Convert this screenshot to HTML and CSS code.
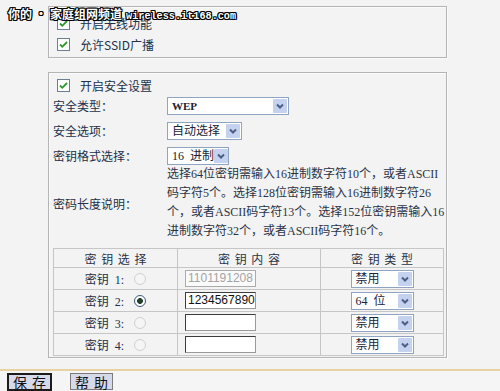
FILE: index.html
```html
<!DOCTYPE html>
<html lang="zh-CN">
<head>
<meta charset="utf-8">
<title>无线安全设置</title>
<link rel="stylesheet" href="styles.css">
</head>
<body>
<div class="watermark">你的<span class="dot">•</span>家庭组网频道<span class="url">wireless.it168.com</span></div>
<div class="page">
  <fieldset class="box box-top">
    <div class="check-row">
      <span class="cb"><svg viewBox="0 0 13 13" width="13" height="13"><rect x="0.5" y="0.5" width="12" height="12" fill="#fff" stroke="#6a7e9a"/><path d="M3 6.5 L5.3 8.8 L10 4" fill="none" stroke="#2a9a2a" stroke-width="1.8"/></svg></span>
      <span>开启无线功能</span>
    </div>
    <div class="check-row">
      <span class="cb"><svg viewBox="0 0 13 13" width="13" height="13"><rect x="0.5" y="0.5" width="12" height="12" fill="#fff" stroke="#6a7e9a"/><path d="M3 6.5 L5.3 8.8 L10 4" fill="none" stroke="#2a9a2a" stroke-width="1.8"/></svg></span>
      <span>允许SSID广播</span>
    </div>
  </fieldset>

  <fieldset class="box box-sec">
    <div class="check-row check-sec">
      <span class="cb"><svg viewBox="0 0 13 13" width="13" height="13"><rect x="0.5" y="0.5" width="12" height="12" fill="#fff" stroke="#6a7e9a"/><path d="M3 6.5 L5.3 8.8 L10 4" fill="none" stroke="#2a9a2a" stroke-width="1.8"/></svg></span>
      <span>开启安全设置</span>
    </div>

    <div class="form-row">
      <div class="lbl">安全类型：</div>
      <div class="sel sel-wep"><span class="sel-text wep">WEP</span><span class="sel-btn"><svg viewBox="0 0 14 14" width="14" height="14"><path d="M4 5.5 L7 8.5 L10 5.5" fill="none" stroke="#4a5f86" stroke-width="2"/></svg></span></div>
    </div>
    <div class="form-row">
      <div class="lbl">安全选项：</div>
      <div class="sel sel-opt"><span class="sel-text">自动选择</span><span class="sel-btn"><svg viewBox="0 0 14 14" width="14" height="14"><path d="M4 5.5 L7 8.5 L10 5.5" fill="none" stroke="#4a5f86" stroke-width="2"/></svg></span></div>
    </div>
    <div class="form-row">
      <div class="lbl">密钥格式选择：</div>
      <div class="sel sel-fmt"><span class="sel-text">16 进制</span><span class="sel-btn"><svg viewBox="0 0 14 14" width="14" height="14"><path d="M4 5.5 L7 8.5 L10 5.5" fill="none" stroke="#4a5f86" stroke-width="2"/></svg></span></div>
    </div>

    <div class="desc-row">
      <div class="lbl">密码长度说明：</div>
      <p class="desc">选择64位密钥需输入16进制数字符10个，或者ASCII<br>码字符5个。选择128位密钥需输入16进制数字符26<br>个，或者ASCII码字符13个。选择152位密钥需输入16<br>进制数字符32个，或者ASCII码字符16个。</p>
    </div>

    <table class="keys">
      <thead>
        <tr><th class="c1">密 钥 选 择</th><th class="c2">密 钥 内 容</th><th class="c3">密 钥 类 型</th></tr>
      </thead>
      <tbody>
        <tr>
          <td class="c1"><span class="key-lbl">密钥 1:</span><span class="radio"></span></td>
          <td class="c2"><div class="key-input disabled">1101191208</div></td>
          <td class="c3"><div class="sel sel-type"><span class="sel-text">禁用</span><span class="sel-btn"><svg viewBox="0 0 14 14" width="14" height="14"><path d="M4 5.5 L7 8.5 L10 5.5" fill="none" stroke="#4a5f86" stroke-width="2"/></svg></span></div></td>
        </tr>
        <tr>
          <td class="c1"><span class="key-lbl">密钥 2:</span><span class="radio on"></span></td>
          <td class="c2"><div class="key-input">1234567890</div></td>
          <td class="c3"><div class="sel sel-type"><span class="sel-text">64 位</span><span class="sel-btn"><svg viewBox="0 0 14 14" width="14" height="14"><path d="M4 5.5 L7 8.5 L10 5.5" fill="none" stroke="#4a5f86" stroke-width="2"/></svg></span></div></td>
        </tr>
        <tr>
          <td class="c1"><span class="key-lbl">密钥 3:</span><span class="radio"></span></td>
          <td class="c2"><div class="key-input"></div></td>
          <td class="c3"><div class="sel sel-type"><span class="sel-text">禁用</span><span class="sel-btn"><svg viewBox="0 0 14 14" width="14" height="14"><path d="M4 5.5 L7 8.5 L10 5.5" fill="none" stroke="#4a5f86" stroke-width="2"/></svg></span></div></td>
        </tr>
        <tr>
          <td class="c1"><span class="key-lbl">密钥 4:</span><span class="radio"></span></td>
          <td class="c2"><div class="key-input"></div></td>
          <td class="c3"><div class="sel sel-type"><span class="sel-text">禁用</span><span class="sel-btn"><svg viewBox="0 0 14 14" width="14" height="14"><path d="M4 5.5 L7 8.5 L10 5.5" fill="none" stroke="#4a5f86" stroke-width="2"/></svg></span></div></td>
        </tr>
      </tbody>
    </table>
  </fieldset>
</div>
<div class="footer">
  <button class="btn btn-default" type="button">保 存</button>
  <button class="btn" type="button">帮 助</button>
</div>
</body>
</html>
```

FILE: styles.css
```css
* { box-sizing: border-box; }
html, body { margin: 0; padding: 0; }
body {
  width: 500px;
  height: 391px;
  overflow: hidden;
  position: relative;
  background: #f3f3f3;
  font-family: "Liberation Serif", "Noto Sans CJK SC", serif;
  font-size: 12px;
  color: #22304a;
}

.watermark {
  position: absolute;
  left: 8px;
  top: 6px;
  z-index: 2;
  white-space: nowrap;
  color: #fff;
  font-family: "Noto Sans CJK SC", sans-serif;
  font-weight: 700;
  font-size: 12px;
  line-height: 16px;
  text-shadow: -1px -1px 0 #000, 1px -1px 0 #000, -1px 1px 0 #000, 1px 1px 0 #000,
               0 -1px 0 #000, 0 1px 0 #000, -1px 0 0 #000, 1px 0 0 #000;
}
.watermark .dot { margin: 0 3px; }
.watermark .url {
  margin-left: 4px;
  font-family: "Liberation Mono", monospace;
  font-size: 10.2px;
  font-weight: 700;
}

.page { padding: 6px 0 0 48px; }

.box {
  margin: 0;
  width: 399px;
  min-inline-size: 0;
  border: 1px solid #b4b4b4;
  box-shadow: inset 1px 1px 0 #fbfbfb, 1px 1px 0 #fbfbfb;
}
.box-top { height: 52px; padding: 6px 4px 2px 4px; }
.box-sec { margin-top: 14px; padding: 4px 4px 1px 4px; }

.check-row {
  display: flex;
  align-items: center;
  gap: 10px;
  height: 21px;
  padding-left: 4px;
  font-family: "Noto Sans CJK SC", sans-serif;
}
.check-row.check-sec { height: 16px; }
.cb { display: flex; width: 13px; height: 13px; }

.form-row {
  display: flex;
  align-items: center;
  height: 25px;
}
.lbl {
  width: 114px;
  flex: none;
  font-family: "Noto Sans CJK SC", sans-serif;
}

.sel {
  display: flex;
  align-items: center;
  justify-content: space-between;
  height: 18px;
  border: 1px solid #8ea4c0;
  background: #fff;
  padding: 0 1px 0 4px;
  color: #1b2233;
}
.sel-text { line-height: 16px; white-space: nowrap; word-spacing: 3px; }
.sel-text.wep { font-weight: 700; font-size: 11px; }
.sel-btn {
  display: flex;
  width: 14px;
  height: 14px;
  background: #c5d2ef;
  border-radius: 1px;
}
.sel-wep { width: 122px; }
.sel-opt { width: 75px; }
.sel-fmt { width: 62px; }
.sel-type { width: 63px; margin: 0 auto; }

.desc-row {
  display: flex;
  align-items: center;
  margin-top: -3px;
}
.desc {
  margin: 0;
  line-height: 19px;
  color: #2a3346;
  white-space: nowrap;
}

.keys {
  margin-top: 7px;
  width: 390px;
  border-collapse: collapse;
  table-layout: fixed;
}
.keys th, .keys td {
  border: 1px solid #c6c6c6;
  padding: 0;
  font-weight: 400;
}
.keys th {
  height: 19px;
  line-height: 17px;
  text-align: center;
  font-family: "Noto Sans CJK SC", sans-serif;
  color: #2a3346;
  word-spacing: 2px;
}
.keys td { height: 22px; }
.keys .c1 { width: 124px; text-align: center; }
.keys .c2 { width: 143px; }
.keys .c3 { width: 123px; }
.keys td.c2 { padding-left: 7px; }

.key-lbl { display: inline-block; vertical-align: middle; word-spacing: 3px; }
.radio {
  display: inline-block;
  vertical-align: middle;
  width: 12px;
  height: 12px;
  margin-left: 10px;
  border-radius: 50%;
  border: 1px solid #d0d0d0;
  background: #f5f5f5;
}
.radio.on {
  border-color: #3b5a7e;
  background: radial-gradient(circle, #22402e 0 2.6px, #fff 3.2px);
}

.key-input {
  width: 71px;
  height: 17px;
  border: 1px solid #3c3c3c;
  border-right-color: #9a9a9a;
  border-bottom-color: #9a9a9a;
  background: #fff;
  padding: 0 2px;
  font-family: "Liberation Sans", sans-serif;
  font-size: 12px;
  line-height: 15px;
  color: #111;
}
.key-input.disabled {
  border-color: #ababab;
  color: #a3a3a3;
  background: #fafafa;
}

.footer {
  margin-top: 11px;
  border-top: 2px solid #e8d2a2;
  background: #f5f5f5;
  height: 30px;
  padding: 2px 0 0 7px;
  display: flex;
  align-items: flex-start;
  gap: 18px;
}
.btn {
  margin: 0;
  padding: 0;
  width: 43px;
  height: 17px;
  border: 1px solid #7c7c7c;
  background: #d6d9ea;
  font-family: "Noto Sans CJK SC", sans-serif;
  font-size: 14px;
  line-height: 14px;
  color: #111;
  word-spacing: 2px;
}
.btn-default {
  width: 45px;
  height: 18px;
  border: 2px solid #1c1c1c;
}
```
